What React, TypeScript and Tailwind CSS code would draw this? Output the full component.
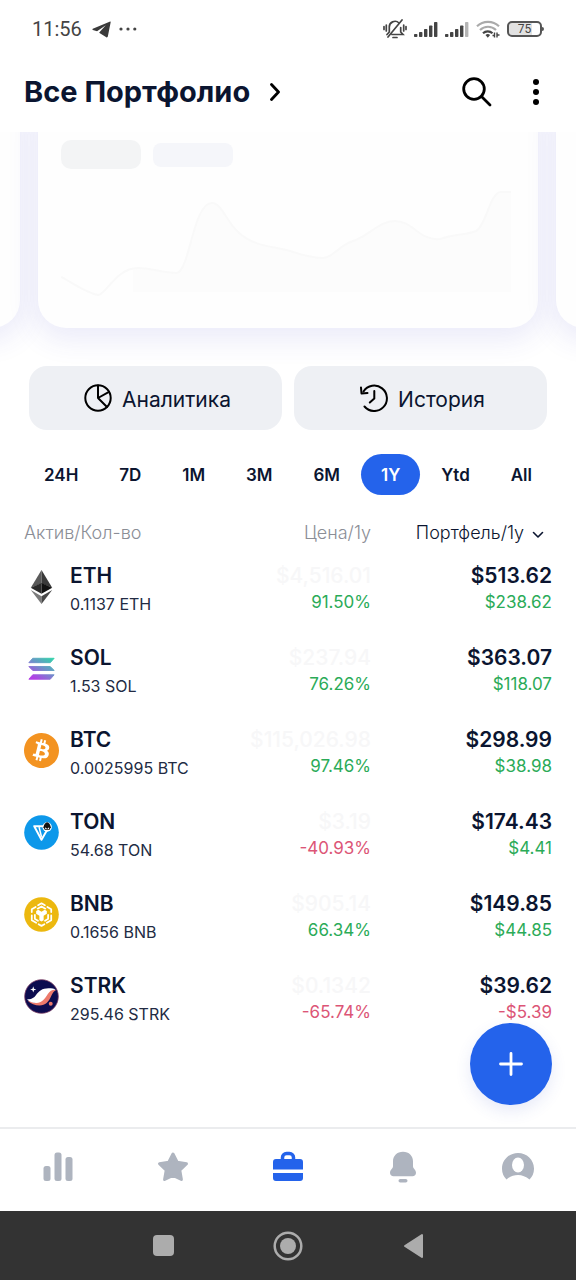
import { useState } from "react"
import type { ReactNode } from "react"
import { SiBitcoin } from "react-icons/si"

interface Asset {
  symbol: string
  amount: string
  price: string
  change: string
  value: string
  profit: string
  icon: ReactNode
}

const PERIODS = ["24H", "7D", "1M", "3M", "6M", "1Y", "Ytd", "All"]

function EthIcon() {
  return (
    <svg viewBox="0 0 36 36" className="size-[35px] shrink-0">
      <path d="M18 1 7 19.2 18 15z" fill="#5a5a5a" />
      <path d="M18 1 29 19.2 18 15z" fill="#3a3a3a" />
      <path d="M7 19.2 18 14.5V25.5z" fill="#2b2b2b" />
      <path d="M29 19.2 18 14.5V25.5z" fill="#111" />
      <path d="M7 21.5 18 28v8z" fill="#7b7b7b" />
      <path d="M29 21.5 18 28v8z" fill="#484848" />
    </svg>
  )
}

function SolIcon() {
  return (
    <svg viewBox="0 0 36 36" className="size-[35px] shrink-0">
      <defs>
        <linearGradient id="sol" gradientUnits="userSpaceOnUse" x1="27" y1="5" x2="12" y2="29">
          <stop offset="0" stopColor="#2fd6a8" />
          <stop offset="0.5" stopColor="#6c93c8" />
          <stop offset="1" stopColor="#b33fe6" />
        </linearGradient>
      </defs>
      <g fill="url(#sol)" stroke="url(#sol)" strokeWidth="1" strokeLinejoin="round">
        <path d="M9 7.500h22l-4 4.500H5z" />
        <path d="M5 16h22l4 4H9z" />
        <path d="M9 24.500h22l-4 4.500H5z" />
      </g>
    </svg>
  )
}

function TonIcon() {
  return (
    <svg viewBox="0 0 36 36" className="size-[35px] shrink-0">
      <circle cx="18" cy="18" r="17.8" fill="#0d98ea" />
      <path d="M10.5 11.5h15.5L18 25.5z" fill="#0d98ea" stroke="#fff" strokeWidth="2" strokeLinejoin="round" />
      <path d="M15.500 12.500 18 22.500" stroke="#fff" strokeWidth="1.600" />
      <circle cx="23.8" cy="12.3" r="4.8" fill="#fff" />
      <path d="M20 12.500c.6-2.500 2-4.800 3.800-5 1.800.2 3.200 2.500 3.800 5l-1.500 3h-4.600z" fill="#111" />
      <path d="m21.800 12.500 2 1.800 2-1.800v2.200h-4z" fill="#fff" />
    </svg>
  )
}

function BnbIcon() {
  return (
    <svg viewBox="0 0 36 36" className="size-[35px] shrink-0">
      <circle cx="18" cy="18" r="17.8" fill="#ecb80f" />
      <g fill="none" stroke="#fff" strokeWidth="1.800" strokeLinejoin="round" strokeLinecap="round">
        <path d="m14.5 8.5 3.5-2 3.5 2" />
        <path d="M8 15.5v-3l4-2.300M28 15.5v-3l-4-2.300" />
        <path d="M8 19v5l4.5 2.6M28 19v5l-4.5 2.6" />
        <path d="m15 28 3 1.7 3-1.7" />
        <path d="m14 12 4-2.300 4 2.300" />
        <path d="M11.200 18.500v4l3.200 2M24.800 18.500v4l-3.200 2" />
      </g>
      <path d="m12.500 14.500 2.200-1.300 3.300 1.900 3.300-1.900 2.200 1.300v2.700l-3.300 2v4.600L18 25.200l-2.200-1.400v-4.600l-3.300-2z" fill="#fff" />
    </svg>
  )
}

function StrkIcon() {
  return (
    <svg viewBox="0 0 36 36" className="size-[35px] shrink-0">
      <circle cx="18" cy="18" r="17.3" fill="#0c0c4f" stroke="#7b3b62" strokeWidth="0.8" />
      <path
        d="M3.500 22c3.500 3.300 8 5.200 12.500 5.200 6 0 9.500-3.700 12-9.700 1.400-3.300 2.800-5.200 5-6l-5-1-9 7-8 7z"
        fill="#ec796b"
      />
      <path
        d="M3 20.500c3.500 1 7-.5 9.200-3.700 3-4.400 6.500-7.300 13-7.300 3.300 0 6 .4 7.800 1.700-4-.3-6.500 1.300-8.500 4.300-3.500 5.500-6.500 9.100-11.500 9.100-4.500 0-8-1.500-10-4.100z"
        fill="#fff"
      />
      <path d="m9.500 7.500.8 2.400 2.400.8-2.400.8-.8 2.400-.8-2.400-2.400-.8 2.400-.8z" fill="#fff" />
      <circle cx="27.500" cy="25.500" r="2" fill="#ec796b" />
    </svg>
  )
}

const ASSETS: Asset[] = [
  { symbol: "ETH", amount: "0.1137", price: "$4,516.01", change: "91.50%", value: "$513.62", profit: "$238.62", icon: <EthIcon /> },
  { symbol: "SOL", amount: "1.53", price: "$237.94", change: "76.26%", value: "$363.07", profit: "$118.07", icon: <SolIcon /> },
  {
    symbol: "BTC",
    amount: "0.0025995",
    price: "$115,026.98",
    change: "97.46%",
    value: "$298.99",
    profit: "$38.98",
    icon: <SiBitcoin className="size-[35px] shrink-0 text-[#f39321]" />,
  },
  { symbol: "TON", amount: "54.68", price: "$3.19", change: "-40.93%", value: "$174.43", profit: "$4.41", icon: <TonIcon /> },
  { symbol: "BNB", amount: "0.1656", price: "$905.14", change: "66.34%", value: "$149.85", profit: "$44.85", icon: <BnbIcon /> },
  { symbol: "STRK", amount: "295.46", price: "$0.1342", change: "-65.74%", value: "$39.62", profit: "-$5.39", icon: <StrkIcon /> },
]

const trendColor = (value: string) => (value.startsWith("-") ? "text-[#dc5576]" : "text-[#2bab58]")

function StatusBar() {
  return (
    <div className="flex h-[58px] items-center justify-between px-8 font-[Roboto,sans-serif] text-[#444]">
      <div className="flex items-center gap-2">
        <span className="text-[20px] leading-6">11:56</span>
        <svg viewBox="0 0 20 18" className="ml-0.5 h-[17px] w-[19px]" fill="#3a3a3a">
          <path d="M19.200.5.8 8.300c-.6.300-.6.900 0 1.100l4.500 1.500L14.500 4.500 7.600 12.200l.3.400 7.200 4.600c.7.400 1.400.1 1.600-.7L19.700 1.200c.1-.6-.1-.8-.5-.7z" />
        </svg>
        <svg viewBox="0 0 18 4" className="h-1 w-[18px]" fill="#444">
          <circle cx="2" cy="2" r="1.600" />
          <circle cx="9" cy="2" r="1.600" />
          <circle cx="15.800" cy="2" r="1.600" />
        </svg>
      </div>
      <div className="flex items-center gap-[7px]">
        {/* Muted bell */}
        <svg viewBox="0 0 24 20" className="h-5 w-6" fill="none" stroke="#444" strokeWidth="1.700" strokeLinecap="round">
          <path d="M9 15.500h11l-2.300-2.500V8.500M16 4a5.700 5.700 0 0 0-9.700 4.500V13L4 15.500M5 18 19 1" />
          <path d="M10 18.500h4M1 7.500v3M3.300 6v6M23 7.500v3M20.700 6v6" />
        </svg>
        <Signal bars={5} />
        <Signal bars={4} />
        <svg viewBox="0 0 24 18" className="h-[18px] w-6" fill="none" strokeWidth="2.200">
          <path d="M1 6.300a16 16 0 0 1 22 0" stroke="#aaa" />
          <path d="M4 10a11.500 11.500 0 0 1 16 0" stroke="#aaa" />
          <path d="M7 13.300a7 7 0 0 1 9.500 0" stroke="#444" />
          <path d="m9.500 15 2.300 2.700 2.300-2.700a3.600 3.600 0 0 0-4.600 0z" fill="#444" />
          <path d="M18.500 12.500v5M21 12.500v5M16.500 15.500h2M21 15h2.500" stroke="#444" strokeWidth="1.400" />
        </svg>
        <div className="flex items-center">
          <div className="flex h-4 w-[35px] items-center justify-center rounded-[5px] border-2 border-[#555] bg-linear-to-r from-[#e2e2e2] from-75% to-white to-75% text-[12px] leading-none">
            75
          </div>
          <div className="h-1 w-0.5 rounded-r bg-[#555]" />
        </div>
      </div>
    </div>
  )
}

function Signal({ bars }: { bars: number }) {
  return (
    <svg viewBox="0 0 24 16" className="h-4 w-6">
      {[3, 5, 8, 11.5, 15].map((h, i) => (
        <rect key={h} x={i * 5} y={16 - h} width="3.400" height={h} rx="0.800" fill={i < bars ? "#444" : "#b5b5b5"} />
      ))}
    </svg>
  )
}

function Header() {
  return (
    <header className="flex h-[74px] items-center justify-between px-6 pb-1.5">
      <button className="flex items-center gap-5">
        <h1 className="text-[29px] leading-9 font-bold">Все Портфолио</h1>
        <svg viewBox="0 0 10 18" className="h-[18px] w-2.5" fill="none" stroke="#000" strokeWidth="2.800" strokeLinecap="round" strokeLinejoin="round">
          <path d="m1.500 1.500 7 7.500-7 7.500" />
        </svg>
      </button>
      <div className="flex items-center gap-10">
        <button aria-label="Поиск">
          <svg viewBox="0 0 30 30" className="size-[30px]" fill="none" stroke="#000" strokeWidth="2.800" strokeLinecap="round">
            <circle cx="12" cy="12" r="10.300" />
            <path d="m19.500 19.500 8.500 8.500" />
          </svg>
        </button>
        <button aria-label="Меню" className="pr-3">
          <svg viewBox="0 0 8 28" className="h-7 w-2">
            <circle cx="4" cy="4" r="3" />
            <circle cx="4" cy="14" r="3" />
            <circle cx="4" cy="24" r="3" />
          </svg>
        </button>
      </div>
    </header>
  )
}

function PortfolioCards() {
  const card = "-mt-10 rounded-[28px] bg-[#fefefe] shadow-[0_8px_28px_4px_rgba(60,60,200,0.1)]"
  return (
    <section className="overflow-hidden pb-[38px]">
      <div className="-mx-[60px] flex gap-[18px]">
        <div className={`${card} w-20 shrink-0`} />
        <div className={`${card} flex-1 pt-12 pr-[27px] pb-[30px] pl-[23px]`}>
          <div className="flex items-center gap-3">
            <div className="h-[29px] w-20 rounded-[10px] bg-[#f3f4f5]" />
            <div className="h-6 w-20 rounded-lg bg-[#f5f6fa]" />
          </div>
          <svg viewBox="61 185 450 113" className="mt-4 w-full">
            <path
              d="M133 269c16-3 28 4 44 4 13-3 16-70 35-70 9 0 14 17 25 28 16 16 36 15 53 20 12 4 22 7 33 7 10 0 15-12 30-17 16-5 26-20 42-20 18 0 24 20 45 18 15-5 27-4 36-8 10-5 14-39 25-39h10v100H133z"
              fill="#fcfcfc"
            />
            <path
              d="M61 277c14 7 23 15 37 18 8 0 18-27 40-27 12 0 25 5 39 5 13-3 16-70 35-70 9 0 14 17 25 28 16 16 36 15 53 20 12 4 22 7 33 7 10 0 15-12 30-17 16-5 26-20 42-20 18 0 24 20 45 18 15-5 27-4 36-8 10-5 14-39 25-39h10"
              fill="none"
              stroke="#f9f9f9"
              strokeWidth="2"
            />
          </svg>
        </div>
        <div className={`${card} w-20 shrink-0`} />
      </div>
    </section>
  )
}

function Actions() {
  const button = "flex h-16 flex-1 items-center justify-center gap-2.5 rounded-[18px] bg-[#eef0f4] pt-1 pl-1 text-[21px] leading-7"
  return (
    <div className="flex gap-3 px-[29px]">
      <button className={button}>
        <svg viewBox="0 0 28 28" className="mb-1 size-7" fill="none" stroke="#000" strokeWidth="2" strokeLinecap="round" strokeLinejoin="round">
          <circle cx="14" cy="14" r="12.700" />
          <path d="M14 1.500V14l11-6.200M14 14l9 9" />
        </svg>
        Аналитика
      </button>
      <button className={button}>
        <svg viewBox="0 0 28 28" className="mb-1 size-7" fill="none" stroke="#000" strokeWidth="2" strokeLinecap="round" strokeLinejoin="round">
          <path d="M3.500 7.500A12.700 12.700 0 1 1 4.500 22.500" />
          <path d="M1 3.500 1.500 9.500 7.500 9" />
          <path d="M14.300 7v7.500L9.800 18.500" />
        </svg>
        История
      </button>
    </div>
  )
}

function AssetTable() {
  return (
    <table className="mx-6 mt-6 table-fixed">
      <thead>
        <tr className="h-[26px] text-[18px]">
          <th className="p-0 text-left font-light text-[#8b8e96]">Актив/Кол-во</th>
          <th className="w-[140px] p-0 text-right font-light text-[#8b8e96]">Цена/1y</th>
          <th className="w-[181px] p-0 font-light">
            <button className="ml-auto flex items-center gap-2 pr-2">
              Портфель/1y
              <svg viewBox="0 0 12 8" className="mt-1 h-2 w-3" fill="none" stroke="#0b1530" strokeWidth="1.600" strokeLinecap="round" strokeLinejoin="round">
                <path d="m1.500 1.500 4.500 4.500 4.500-4.500" />
              </svg>
            </button>
          </th>
        </tr>
      </thead>
      <tbody>
        {ASSETS.map((asset) => (
          <tr key={asset.symbol} className="h-[82px] align-top">
            <td className="p-0 pt-4">
              <div className="flex gap-[11px]">
                <div className="pt-[7px]">{asset.icon}</div>
                <div className="whitespace-nowrap">
                  <div className="text-[21px] leading-7 font-semibold">{asset.symbol}</div>
                  <div className="text-[16px] leading-7 text-[#222b43]">
                    {asset.amount} {asset.symbol}
                  </div>
                </div>
              </div>
            </td>
            <td className="p-0 pt-4 text-right">
              <div className="text-[21px] leading-7 font-medium text-[#f7f7f8]">{asset.price}</div>
              <div className={`text-[17px] leading-6 ${trendColor(asset.change)}`}>{asset.change}</div>
            </td>
            <td className="p-0 pt-4 text-right">
              <div className="text-[21px] leading-7 font-semibold">{asset.value}</div>
              <div className={`text-[17px] leading-6 ${trendColor(asset.profit)}`}>{asset.profit}</div>
            </td>
          </tr>
        ))}
      </tbody>
    </table>
  )
}

function BottomNav() {
  const items = [
    {
      label: "Рынок",
      icon: (
        <>
          <rect x="1.500" y="15" width="7" height="15" rx="2.500" />
          <rect x="12.500" y="1.500" width="7" height="28.500" rx="2.500" />
          <rect x="23.500" y="6" width="7" height="24" rx="2.500" />
        </>
      ),
    },
    {
      label: "Избранное",
      icon: (
        <path
          d="m16 3 4.200 8.300 9.300 1.400-6.700 6.500 1.600 9.300L16 24.300l-8.400 4.200 1.600-9.300-6.700-6.500 9.300-1.400z"
          stroke="currentColor"
          strokeWidth="3"
          strokeLinejoin="round"
        />
      ),
    },
    {
      label: "Портфолио",
      active: true,
      icon: (
        <>
          <path d="M10.500 9V6.500a4 4 0 0 1 4-4h3a4 4 0 0 1 4 4V9" fill="none" stroke="currentColor" strokeWidth="3.500" />
          <path d="M4 8h24a3 3 0 0 1 3 3v7.500H1V11a3 3 0 0 1 3-3zM1 22h30v5a3 3 0 0 1-3 3H4a3 3 0 0 1-3-3z" />
        </>
      ),
    },
    {
      label: "Оповещения",
      icon: (
        <>
          <path d="M16 .8c6 0 10 4.200 10 9.500v5c0 2.500 3 3.500 3 6.500 0 2-1.500 3.500-3.500 3.500h-19C4.500 25.300 3 23.800 3 21.800c0-3 3-4 3-6.500v-5C6 5 10 .8 16 .8z" />
          <rect x="11.500" y="28" width="9" height="3.500" rx="1.750" />
        </>
      ),
    },
    {
      label: "Профиль",
      icon: (
        <>
          <path d="M4.500 28.500A16 15.500 0 0 1 0 17.500C0 8.800 7.200 2 16 2s16 6.800 16 15.500a16 15.500 0 0 1-4.500 11C24 25.500 20 24 16 24S8 25.500 4.500 28.500z" />
          <ellipse cx="16" cy="14" rx="6" ry="7.500" fill="#fff" />
        </>
      ),
    },
  ]

  return (
    <nav className="grid h-[84px] grid-cols-5 border-t-2 border-[#ebecee] bg-white pb-1.5">
      {items.map((item) => (
        <button
          key={item.label}
          aria-label={item.label}
          className={`flex items-center justify-center ${item.active ? "text-[#2463eb]" : "text-[#aeb4bf]"}`}
        >
          <svg viewBox="0 0 32 32" className="size-8" fill="currentColor">
            {item.icon}
          </svg>
        </button>
      ))}
    </nav>
  )
}

function SystemBar() {
  return (
    <div className="flex h-[69px] items-center justify-center bg-[#333] text-[#acacac]">
      <button aria-label="Недавние" className="flex w-[125px] justify-center">
        <span className="size-[21px] rounded-[4px] bg-current" />
      </button>
      <button aria-label="Домой" className="flex w-[125px] justify-center">
        <svg viewBox="0 0 30 30" className="size-[30px]">
          <circle cx="15" cy="15" r="13.300" fill="none" stroke="currentColor" strokeWidth="2.500" />
          <circle cx="15" cy="15" r="8" fill="currentColor" />
        </svg>
      </button>
      <button aria-label="Назад" className="flex w-[125px] justify-center">
        <svg viewBox="0 0 21 26" className="h-[26px] w-[21px]" fill="currentColor" stroke="currentColor" strokeWidth="2" strokeLinejoin="round">
          <path d="M19 2v22L2 13z" />
        </svg>
      </button>
    </div>
  )
}

export default function App() {
  const [period, setPeriod] = useState("1Y")

  return (
    <div className="flex min-h-screen flex-col bg-white font-[Inter,sans-serif] text-[#0b1530]">
      <StatusBar />
      <Header />
      <main className="relative flex flex-1 flex-col">
        <PortfolioCards />
        <Actions />
        <div className="mt-6 flex justify-between px-6">
          {PERIODS.map((item) => (
            <button
              key={item}
              onClick={() => setPeriod(item)}
              className={`h-[41px] rounded-full px-5 text-[17px] leading-6 font-semibold ${
                period === item ? "bg-[#2463eb] text-white" : ""
              }`}
            >
              {item}
            </button>
          ))}
        </div>
        <AssetTable />
        <button
          aria-label="Добавить"
          className="absolute right-6 bottom-[22px] flex size-[82px] items-center justify-center rounded-full bg-[#2463eb] shadow-[0_6px_16px_rgba(60,80,200,0.12)]"
        >
          <svg viewBox="0 0 24 24" className="size-6" fill="none" stroke="#fff" strokeWidth="2.800" strokeLinecap="round">
            <path d="M12 1.500v21M1.500 12h21" />
          </svg>
        </button>
      </main>
      <BottomNav />
      <SystemBar />
    </div>
  )
}
